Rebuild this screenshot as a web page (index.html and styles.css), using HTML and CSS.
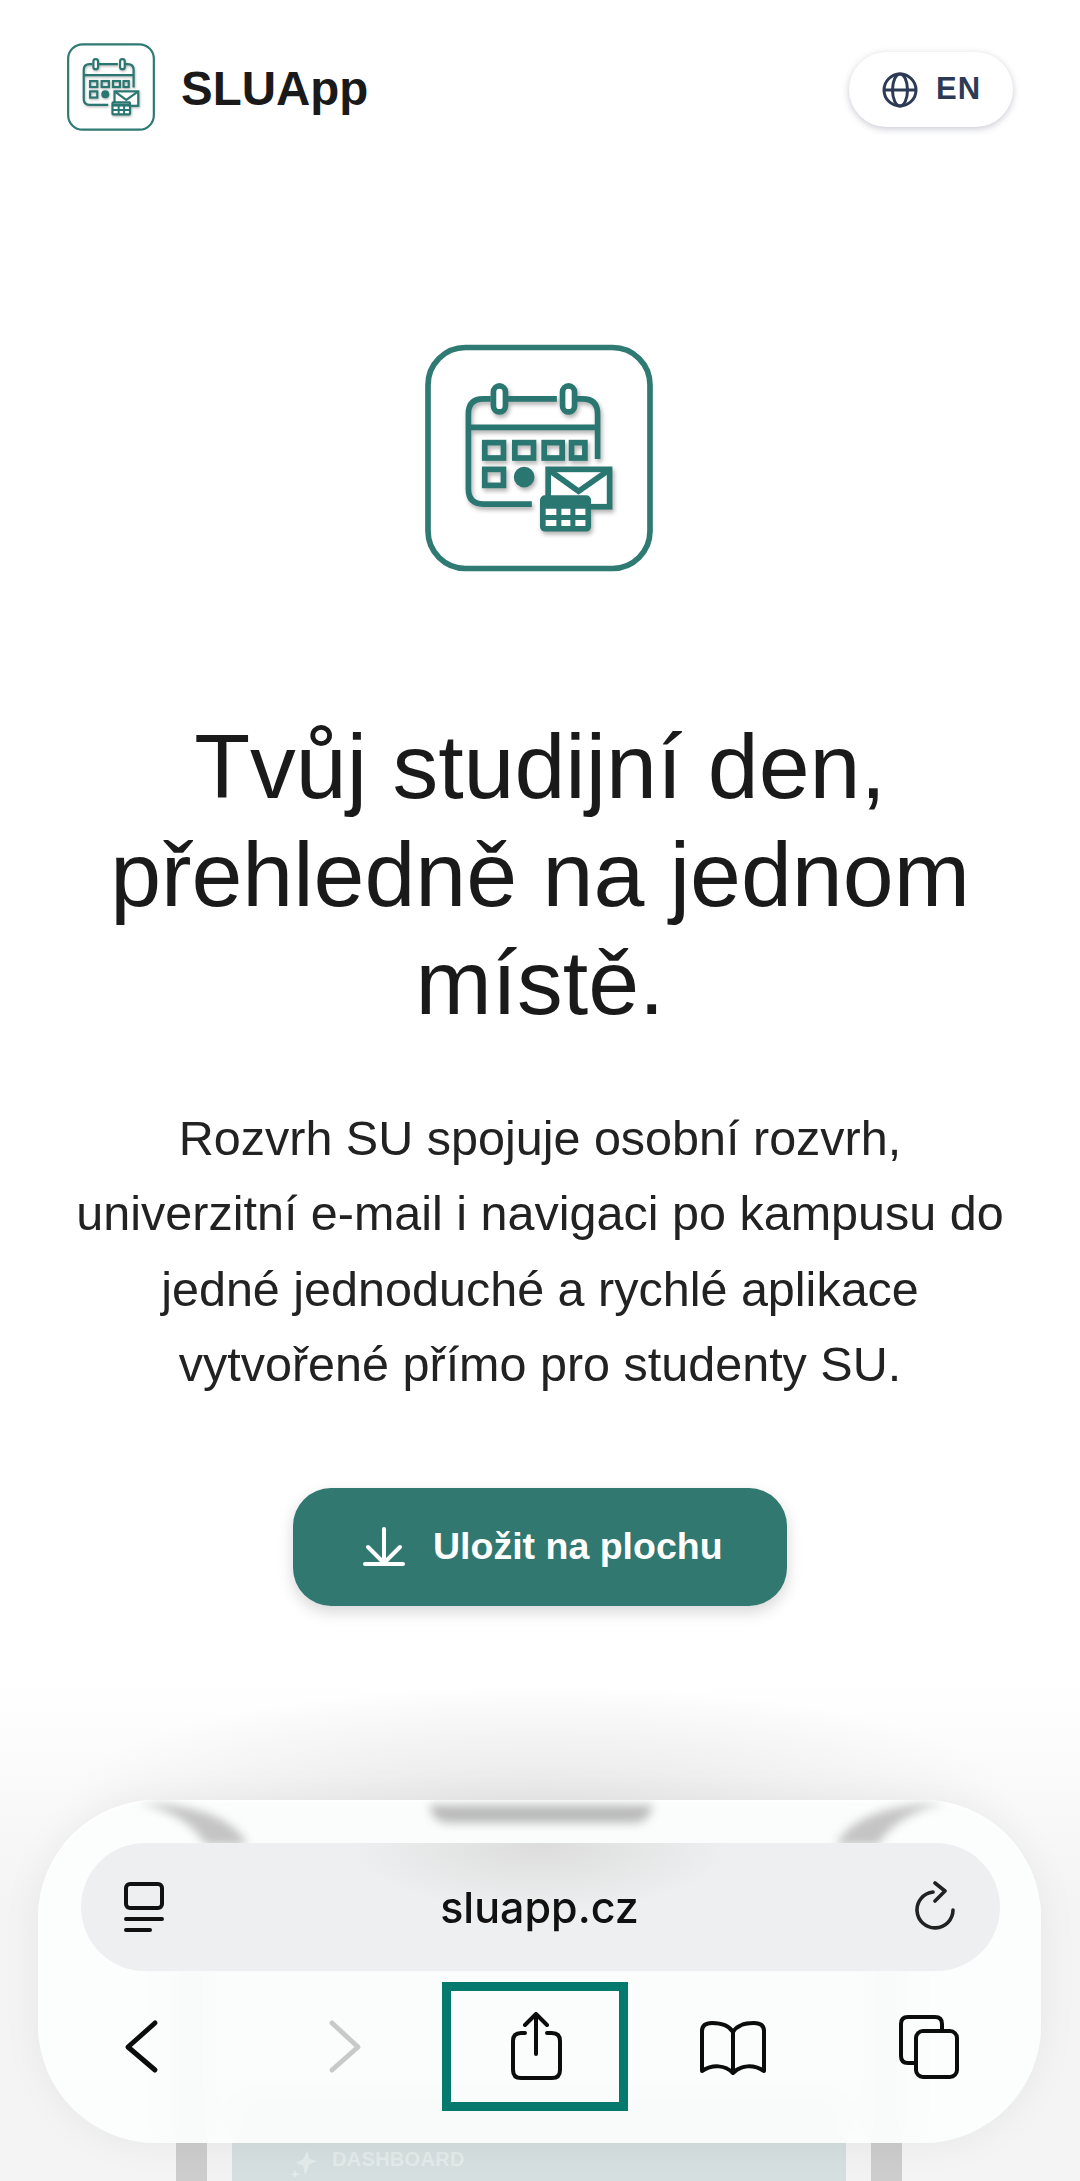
FILE: index.html
```html
<!DOCTYPE html>
<html lang="cs">
<head>
  <meta charset="UTF-8">
  <title>SLUApp</title>
  <link rel="stylesheet" href="styles.css">
</head>
<body>
  <svg class="defs" width="0" height="0">
    <symbol id="app-logo" viewBox="75 72 683 680">
      <rect x="84" y="81" width="665" height="662" rx="112" fill="#fff" stroke="#2f7a73" stroke-width="17"/>
      <g class="logo-art" fill="none" stroke="#2a7671" stroke-width="17">
        <path d="M592 415V280Q592 235 547 235H522M470 235H322M272 235H250Q205 235 205 280V505Q205 550 250 550H395"/>
        <path d="M205 320H592"/>
        <rect x="280" y="196" width="36" height="78" rx="18" fill="#fff"/>
        <rect x="487" y="196" width="36" height="78" rx="18" fill="#fff"/>
        <rect x="254" y="366" width="56" height="46"/>
        <rect x="344" y="366" width="56" height="46"/>
        <rect x="432" y="366" width="54" height="46"/>
        <rect x="514" y="366" width="40" height="46"/>
        <rect x="254" y="446" width="56" height="48"/>
        <circle cx="372" cy="469" r="31" fill="#2a7671" stroke="none"/>
        <rect x="444" y="446" width="184" height="112" fill="#fff"/>
        <path d="M452 452L535 512L620 452"/>
        <rect x="428" y="532" width="136" height="92" rx="6" fill="#fff"/>
        <path d="M428 552H564" stroke-width="24"/>
        <path d="M428 590H564M476 552V624M518 552V624" stroke-width="15"/>
      </g>
    </symbol>
  </svg>

  <header class="site-header">
    <a class="brand">
      <svg class="brand-logo"><use href="#app-logo"/></svg>
      <span class="brand-name">SLUApp</span>
    </a>
    <button class="lang-btn">
      <svg class="globe" viewBox="0 0 36 36" fill="none" stroke="#2d3a55" stroke-width="3">
        <circle cx="18" cy="18" r="16"/>
        <ellipse cx="18" cy="18" rx="7.5" ry="16"/>
        <path d="M2 18H34"/>
      </svg>
      <span>EN</span>
    </button>
  </header>

  <main class="hero">
    <svg class="hero-logo"><use href="#app-logo"/></svg>
    <h1>Tvůj studijní den,<br>přehledně na jednom<br>místě.</h1>
    <p>Rozvrh SU spojuje osobní rozvrh,<br>univerzitní e-mail i navigaci po kampusu do<br>jedné jednoduché a rychlé aplikace<br>vytvořené přímo pro studenty SU.</p>
    <button class="save-btn">
      <svg class="save-icon" viewBox="0 0 42 40" fill="none" stroke="#fff" stroke-width="4" stroke-linecap="round" stroke-linejoin="round">
        <path d="M21 2V37M5 20L21 36L37 20M2 37H40"/>
      </svg>
      <span>Uložit na plochu</span>
    </button>
  </main>

  <div class="page-fade"></div>

  <!-- phone preview further down the page, mostly behind the browser bar -->
  <div class="device">
    <div class="device-panel">
      <svg class="spark" viewBox="0 0 24 24" fill="#e3eaea"><path d="M14 2l1.500 6.500 6 2-6 2.500-3.500 9-1.500-8-6-2 6-3zM4 17l1 3 3 1-3 1-1 2-1-2-2-1 2-1z"/></svg>
      <span>DASHBOARD</span>
    </div>
  </div>

  <div class="browser-bar">
    <svg class="blob blob-left" viewBox="0 0 110 42"><path d="M0 0C50 0 95 12 110 42H68C55 20 30 6 0 0Z"/></svg>
    <div class="blob blob-mid"></div>
    <svg class="blob blob-right" viewBox="0 0 110 42"><path d="M0 0C50 0 95 12 110 42H68C55 20 30 6 0 0Z"/></svg>

    <div class="url-bar">
      <svg class="url-icon" viewBox="0 0 40 52" fill="none" stroke="#111" stroke-width="4" stroke-linecap="round">
        <rect x="2" y="3" width="36" height="24" rx="4"/>
        <path d="M2 38H38M2 49H26"/>
      </svg>
      <span class="url-text">sluapp.cz</span>
      <svg class="url-icon" viewBox="0 0 40 52" fill="none" stroke="#222" stroke-width="3.6" stroke-linecap="round" stroke-linejoin="round">
        <path d="M18 11A18 18 0 1 0 38 29"/>
        <path d="M20 2L30 10L20 20"/>
      </svg>
    </div>

    <nav class="bar-nav">
      <svg class="nav-back" viewBox="0 0 36 56" fill="none" stroke="#0c0c0c" stroke-width="5" stroke-linecap="round" stroke-linejoin="round">
        <path d="M32 4L5 28L32 51"/>
      </svg>
      <svg class="nav-forward" viewBox="0 0 36 56" fill="none" stroke="#c9c9c9" stroke-width="5" stroke-linecap="round" stroke-linejoin="round">
        <path d="M5 4L31 28L5 51"/>
      </svg>
      <div class="share-box">
        <svg class="share-icon" viewBox="0 0 60 70" fill="none" stroke="#0c0c0c" stroke-width="4" stroke-linecap="round" stroke-linejoin="round">
          <path d="M20 21H16Q8 21 8 29V58Q8 66 16 66H47Q55 66 55 58V29Q55 21 47 21H42"/>
          <path d="M31 42V3M20 13L31 2L42 13"/>
        </svg>
      </div>
      <svg class="nav-book" viewBox="0 0 70 60" fill="none" stroke="#0c0c0c" stroke-width="4" stroke-linecap="round" stroke-linejoin="round">
        <path d="M35 15V56M35 15C31 8 22 6 14 6C7 6 4 9 4 14V54C15 47 27 48 35 56C43 48 55 47 66 54V14C66 9 63 6 56 6C48 6 39 8 35 15Z"/>
      </svg>
      <svg class="nav-tabs" viewBox="0 0 64 66" fill="none" stroke="#0c0c0c" stroke-width="4" stroke-linecap="round" stroke-linejoin="round">
        <path d="M19 49H11Q4 49 4 42V10Q4 3 11 3H38Q45 3 45 10V17"/>
        <rect x="19" y="17" width="41" height="46" rx="7"/>
      </svg>
    </nav>
  </div>
</body>
</html>
```

FILE: styles.css
```css
* {
  box-sizing: border-box;
}
html, body {
  margin: 0;
  height: 2181px;
  overflow: hidden;
}
body {
  position: relative;
  background: #fff;
  color: #1a1a1a;
  font-family: "Liberation Sans", Arial, sans-serif;
}
button {
  font-family: inherit;
  border: none;
  cursor: pointer;
}
.defs {
  position: absolute;
}
.logo-art {
  filter: drop-shadow(5px 9px 7px rgba(0, 0, 0, 0.3));
}

/* header */
.site-header {
  display: flex;
  justify-content: space-between;
  align-items: flex-start;
  padding: 43px 67px 0;
}
.brand {
  display: flex;
  align-items: center;
  gap: 26px;
}
.brand-logo {
  width: 88px;
  height: 88px;
}
.brand-name {
  padding-top: 3px;
  font-size: 47.5px;
  font-weight: bold;
}
.lang-btn {
  display: flex;
  align-items: center;
  gap: 18px;
  width: 164px;
  height: 75px;
  margin-top: 9px;
  padding-left: 33px;
  border-radius: 38px;
  background: #fff;
  color: #2d3a55;
  font-size: 31px;
  font-weight: bold;
  letter-spacing: 1px;
  box-shadow: 0 2px 7px rgba(60, 65, 100, 0.28);
}
.lang-btn span {
  margin-top: -2px;
}
.globe {
  width: 36px;
  height: 36px;
}

/* hero */
.hero {
  display: flex;
  flex-direction: column;
  align-items: center;
  padding-top: 213px;
  text-align: center;
}
.hero-logo {
  width: 228px;
  height: 228px;
  margin-right: 3px;
}
.hero h1 {
  margin: 140px 0 0;
  font-size: 91.5px;
  font-weight: normal;
  line-height: 108px;
  color: #1a1a1a;
}
.hero p {
  margin: 65px 0 0;
  font-size: 48.5px;
  line-height: 75.4px;
  color: #222;
}
.save-btn {
  display: flex;
  align-items: center;
  gap: 28px;
  width: 494px;
  height: 118px;
  margin-top: 85px;
  padding-left: 70px;
  border-radius: 38px;
  background: #317871;
  color: #fff;
  font-size: 37.5px;
  font-weight: bold;
  box-shadow: 0 6px 16px rgba(0, 0, 0, 0.16);
}
.save-icon {
  width: 42px;
  height: 40px;
}

/* bottom of the page, behind the browser bar */
.page-fade {
  position: absolute;
  left: 0;
  right: 0;
  top: 1680px;
  bottom: 0;
  background:
    radial-gradient(ellipse 480px 120px at 50% 125px, #e8e8e8, rgba(232, 232, 232, 0)),
    linear-gradient(#fff, #f4f4f4 45%);
}
.device {
  position: absolute;
  left: 176px;
  top: 1900px;
  width: 726px;
  height: 281px;
  padding: 190px 25px 0;
  overflow: hidden;
  border-left: 31px solid #cdcdcd;
  border-right: 31px solid #cdcdcd;
  background: #f2f2f2;
}
.device-panel {
  display: flex;
  align-items: flex-start;
  gap: 12px;
  height: 91px;
  padding: 58px 0 0 58px;
  background: #d5dfdf;
  color: #e3eaea;
  font-size: 20px;
  font-weight: bold;
  letter-spacing: 0.3px;
}
.spark {
  width: 30px;
  height: 30px;
  flex: none;
}

/* browser bar */
.browser-bar {
  position: absolute;
  left: 38px;
  top: 1800px;
  width: 1003px;
  height: 343px;
  padding: 43px 41px 0 43px;
  overflow: hidden;
  border-radius: 118px;
  background: rgba(252, 253, 253, 0.92);
  backdrop-filter: blur(14px);
  box-shadow: 0 0 40px rgba(0, 0, 0, 0.06), inset 0 2px 1px #fff;
}
.blob {
  position: absolute;
  background: #bbb;
  filter: blur(5px);
}
svg.blob {
  width: 110px;
  height: 42px;
  top: 3px;
  fill: #c4c4c4;
  background: none;
}
.blob-left {
  left: 100px;
}
.blob-right {
  left: 798px;
  transform: scaleX(-1);
}
.blob-mid {
  left: 392px;
  top: 5px;
  width: 222px;
  height: 18px;
  border-radius: 0 0 40px 40px;
}
.url-bar {
  position: relative;
  display: flex;
  justify-content: space-between;
  align-items: center;
  height: 128px;
  padding: 0 45px 0 43px;
  border-radius: 64px;
  background:
    radial-gradient(ellipse 190px 70px at 50% 0, #dcdcdc, rgba(220, 220, 220, 0)),
    #eeeff0;
}
.url-icon {
  width: 40px;
  height: 52px;
}
.url-text {
  font-family: Inter, "Liberation Sans", sans-serif;
  font-size: 43px;
  font-weight: 500;
  color: #111;
}
.bar-nav {
  position: relative;
  display: flex;
  align-items: center;
  height: 129px;
  margin-top: 11px;
  padding-left: 42px;
}
.nav-back,
.nav-forward {
  width: 36px;
  height: 56px;
}
.nav-forward {
  margin-left: 168px;
}
.share-box {
  display: flex;
  justify-content: center;
  align-items: center;
  width: 186px;
  height: 129px;
  margin-left: 79px;
  border: 9px solid #047a6e;
}
.share-icon {
  width: 60px;
  height: 70px;
}
.nav-book {
  width: 70px;
  height: 60px;
  margin-left: 70px;
}
.nav-tabs {
  width: 64px;
  height: 66px;
  margin-left: 129px;
}
```
